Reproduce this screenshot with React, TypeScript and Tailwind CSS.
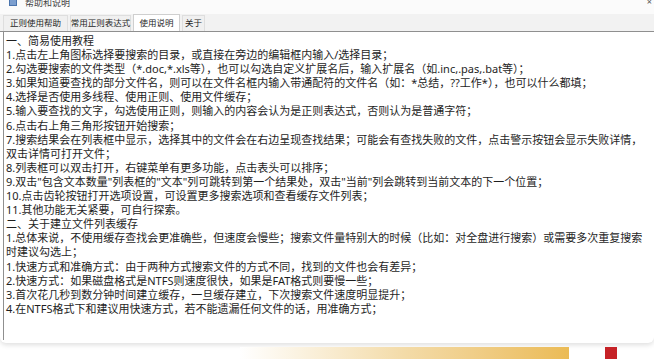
import React from 'react'

const lines: string[] = [
  '一、简易使用教程',
  '1.点击左上角图标选择要搜索的目录，或直接在旁边的编辑框内输入/选择目录；',
  '2.勾选要搜索的文件类型（*.doc,*.xls等），也可以勾选自定义扩展名后，输入扩展名（如.inc,.pas,.bat等）；',
  '3.如果知道要查找的部分文件名，则可以在文件名框内输入带通配符的文件名（如：*总结，??工作*），也可以什么都填；',
  '4.选择是否使用多线程、使用正则、使用文件缓存；',
  '5.输入要查找的文字，勾选使用正则，则输入的内容会认为是正则表达式，否则认为是普通字符；',
  '6.点击右上角三角形按钮开始搜索；',
  '7.搜索结果会在列表框中显示，选择其中的文件会在右边呈现查找结果；可能会有查找失败的文件，点击警示按钮会显示失败详情，',
  '双击详情可打开文件；',
  '8.列表框可以双击打开，右键菜单有更多功能，点击表头可以排序；',
  '9.双击"包含文本数量"列表框的"文本"列可跳转到第一个结果处，双击"当前"列会跳转到当前文本的下一个位置；',
  '10.点击齿轮按钮打开选项设置，可设置更多搜索选项和查看缓存文件列表；',
  '11.其他功能无关紧要，可自行探索。',
  '二、关于建立文件列表缓存',
  '1.总体来说，不使用缓存查找会更准确些，但速度会慢些；搜索文件量特别大的时候（比如：对全盘进行搜索）或需要多次重复搜索',
  '时建议勾选上；',
  '1.快速方式和准确方式：由于两种方式搜索文件的方式不同，找到的文件也会有差异；',
  '2.快速方式：如果磁盘格式是NTFS则速度很快，如果是FAT格式则要慢一些；',
  '3.首次花几秒到数分钟时间建立缓存，一旦缓存建立，下次搜索文件速度明显提升；',
  '4.在NTFS格式下和建议用快速方式，若不能遗漏任何文件的话，用准确方式；',
]

const tabs = [
  { label: '正则使用帮助', w: 'w-[65px]' },
  { label: '常用正则表达式', w: 'w-[61px]' },
  { label: '使用说明', w: 'w-[47px]' },
  { label: '关于', w: 'w-[23px]' },
]

export default function App() {
  return (
    <div className="w-[654px] h-[364px] bg-white overflow-hidden font-['Noto_Sans','Noto_Sans_CJK_SC',sans-serif] text-[#1e1e1e]">
      <div className="h-[343px] bg-white rounded-b-[6px] shadow-[0_2px_5px_rgba(0,0,0,0.13)] flex flex-col">
        {/* title bar, cut off at the top */}
        <div className="h-[14px] flex items-start pl-[9px] overflow-hidden bg-[#fbfbfb]">
          <div className="mt-[-3px] w-[8px] h-[9px] bg-[#7c9fcf] border border-[#4a74ad]" />
          <span className="ml-[8px] mt-[-2px] text-[9px] leading-[9px] text-[#444]">帮助和说明</span>
          <span className="ml-auto mr-[2px] mt-[-3px] text-[9px] leading-[9px] text-[#555]">×</span>
        </div>
        {/* tabs */}
        <div className="h-[18px] bg-[#f2f2f2] flex items-end gap-[2px] pl-[3px] border-b border-[#8f8f8f]">
          {tabs.map((t, i) => (
            <div
              key={t.label}
              className={`${t.w} flex items-center justify-center text-[8.5px] whitespace-nowrap border-t border-l border-r ${
                i === 2 ? 'h-[17px] bg-white border-[#cfcfcf]' : 'h-[16px] bg-[#f0f0f0] border-[#dedede]'
              }`}
            >
              {t.label}
            </div>
          ))}
        </div>
        {/* content */}
        <div className="flex-1 ml-[3px] mb-[3px] border-l border-[#8f8f8f] pl-[2px] pt-[2px] text-[11px] leading-[14.1px] whitespace-nowrap overflow-hidden">
          {lines.map((l, i) => (
            <div key={i}>{l}</div>
          ))}
        </div>
      </div>
      <div className="flex items-start mt-[4px]">
        <div className="ml-[240px] w-[329px] h-[12px] bg-gradient-to-r from-[#ffffff] via-[#f3dba8] to-[#ebbb55]" />
        <div className="ml-[36px] w-[12px] h-[12px] bg-[#c62227]" />
      </div>
    </div>
  )
}
